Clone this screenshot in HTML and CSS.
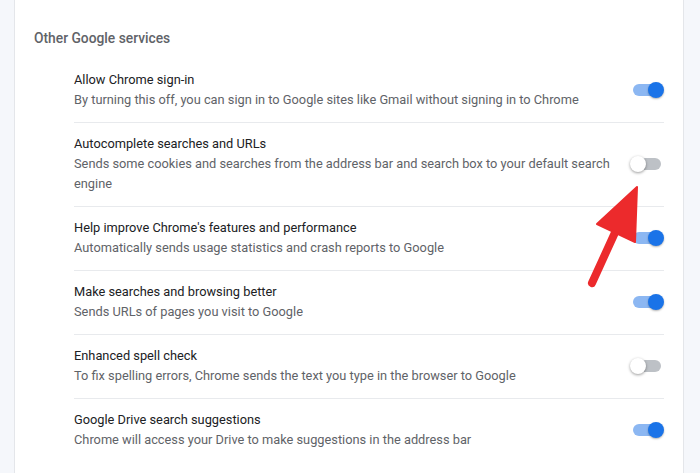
FILE: index.html
```html
<!DOCTYPE html>
<html lang="en">
<head>
  <meta charset="UTF-8" />
  <meta name="viewport" content="width=device-width, initial-scale=1.0">
  <title>Settings - Other Google services</title>
  <link rel="stylesheet" href="styles.css">
</head>
<body>

  <div class="page">
    <section class="card">
      <h2 class="section-title">Other Google services</h2>

      <div class="settings-list">
        <div class="setting-row">
          <div class="setting-text">
            <div class="setting-label">Allow Chrome sign-in</div>
            <div class="setting-sub">By turning this off, you can sign in to Google sites like Gmail without signing in to Chrome</div>
          </div>
          <span class="toggle on"><span class="bar"></span><span class="knob"></span></span>
        </div>

        <div class="setting-row">
          <div class="setting-text">
            <div class="setting-label">Autocomplete searches and URLs</div>
            <div class="setting-sub">Sends some cookies and searches from the address bar and search box to your default search engine</div>
          </div>
          <span class="toggle"><span class="bar"></span><span class="knob"></span></span>
        </div>

        <div class="setting-row">
          <div class="setting-text">
            <div class="setting-label">Help improve Chrome's features and performance</div>
            <div class="setting-sub">Automatically sends usage statistics and crash reports to Google</div>
          </div>
          <span class="toggle on"><span class="bar"></span><span class="knob"></span></span>
        </div>

        <div class="setting-row">
          <div class="setting-text">
            <div class="setting-label">Make searches and browsing better</div>
            <div class="setting-sub">Sends URLs of pages you visit to Google</div>
          </div>
          <span class="toggle on"><span class="bar"></span><span class="knob"></span></span>
        </div>

        <div class="setting-row">
          <div class="setting-text">
            <div class="setting-label">Enhanced spell check</div>
            <div class="setting-sub">To fix spelling errors, Chrome sends the text you type in the browser to Google</div>
          </div>
          <span class="toggle"><span class="bar"></span><span class="knob"></span></span>
        </div>

        <div class="setting-row">
          <div class="setting-text">
            <div class="setting-label">Google Drive search suggestions</div>
            <div class="setting-sub">Chrome will access your Drive to make suggestions in the address bar</div>
          </div>
          <span class="toggle on"><span class="bar"></span><span class="knob"></span></span>
        </div>
      </div>
    </section>
  </div>

  <!-- red annotation arrow pointing at the autocomplete toggle -->
  <svg class="annotation" width="700" height="473" viewBox="0 0 700 473">
    <line x1="592" y1="283" x2="618" y2="226" stroke="#ec2a2c" stroke-width="8" stroke-linecap="round" />
    <polygon points="637,187 597,224 635,242" fill="#ec2a2c" stroke="#ec2a2c" stroke-width="2" stroke-linejoin="round" />
  </svg>

</body>
</html>
```

FILE: styles.css
```css
body {
  margin: 0;
  background: #f5f7fb;
  font-family: Roboto, 'Liberation Sans', sans-serif;
  font-size: 12.8px;
  overflow: hidden;
}

.page {
  position: relative;
  height: 473px;
  padding: 0 16px 0 14px;
}

.card {
  background: #fff;
  height: 100%;
  border-left: 1px solid #e4e6ea;
  border-right: 1px solid #e4e6ea;
  box-sizing: border-box;
  padding-top: 28px;
}

.section-title {
  margin: 0 0 10px 0;
  padding-left: 19px;
  font-size: 13.8px;
  line-height: 20px;
  font-weight: 500;
  color: #5f6368;
}

.settings-list {
  margin: 0 19px 0 59px;
}

.setting-row {
  display: flex;
  align-items: center;
  gap: 8px;
  padding: 11px 0 12px;
  border-top: 1px solid #e8eaed;
}

.setting-row:first-child {
  border-top: none;
  padding-top: 12px;
}

.setting-text {
  flex: 1;
  line-height: 20px;
}

.setting-label {
  color: #202124;
}

.setting-sub {
  color: #5f6368;
}

/* chrome style switch */
.toggle {
  position: relative;
  flex: none;
  width: 34px;
  height: 16px;
}

.toggle .bar {
  position: absolute;
  left: 3px;
  top: 2px;
  width: 28px;
  height: 12px;
  border-radius: 6px;
  background: #bdc1c6;
}

.toggle .knob {
  position: absolute;
  left: 0;
  top: 0;
  width: 16px;
  height: 16px;
  border-radius: 50%;
  background: #fff;
  box-shadow: 0 1px 3px rgba(0,0,0,0.4);
}

.toggle.on .bar {
  background: #8cb7f2;
}

.toggle.on .knob {
  left: 18px;
  background: #1a73e8;
  box-shadow: 0 1px 2px rgba(0,0,0,0.3);
}

.annotation {
  position: absolute;
  left: 0;
  top: 0;
  pointer-events: none;
}
```
